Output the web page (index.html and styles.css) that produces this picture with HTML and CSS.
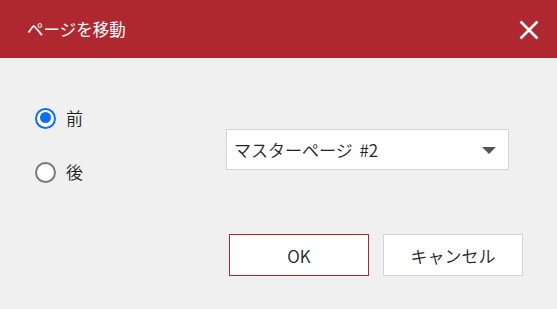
FILE: index.html
```html
<!DOCTYPE html>
<html lang="ja">
<head>
<meta charset="utf-8">
<link rel="stylesheet" href="styles.css">
</head>
<body>
<div class="dialog">
  <header class="header">
    <span class="title">ページを移動</span>
    <span class="close" aria-label="閉じる">
      <svg width="20" height="20" viewBox="0 0 20 20"><path d="M1.5 1.5 L18.5 18.5 M18.5 1.5 L1.5 18.5" stroke="#fff" stroke-width="2.6" fill="none"/></svg>
    </span>
  </header>
  <section class="content">
    <div class="main">
      <div class="radios">
        <label class="radio-row"><span class="radio checked"></span><span class="label">前</span></label>
        <label class="radio-row"><span class="radio"></span><span class="label">後</span></label>
      </div>
      <div class="select">
        <span class="select-text">マスターページ&nbsp;#2</span>
        <span class="arrow"></span>
      </div>
    </div>
    <div class="actions">
      <button class="btn primary">OK</button>
      <button class="btn">キャンセル</button>
    </div>
  </section>
</div>
</body>
</html>
```
FILE: styles.css
```css
html, body {
  margin: 0;
  padding: 0;
}
body {
  width: 557px;
  height: 309px;
  background: #f0f0f0;
  font-family: "Noto Sans CJK JP", "Noto Sans", sans-serif;
  font-weight: 350;
  color: #222;
  overflow: hidden;
}
.dialog {
  width: 557px;
  height: 309px;
  background: #f0f0f0;
}
.header {
  height: 58px;
  background: #b0282f;
  display: flex;
  align-items: center;
  justify-content: space-between;
  padding: 0 18px 0 27px;
  box-sizing: border-box;
}
.title {
  color: #fff;
  font-size: 16.5px;
  font-weight: 400;
  line-height: 20px;
  margin-top: -1px;
}
.close {
  display: flex;
  width: 20px;
  height: 20px;
  margin-top: 1px;
}
.content {
  padding: 45px 34px 0 35px;
}
.main {
  display: flex;
}
.radios {
  width: 191px;
  display: flex;
  flex-direction: column;
  gap: 24px;
}
.radio-row {
  height: 30px;
  display: flex;
  align-items: center;
  gap: 10px;
}
.radio {
  width: 21px;
  height: 21px;
  box-sizing: border-box;
  border-radius: 50%;
  border: 2px solid #7a7a7a;
  background: #fff;
  position: relative;
}
.radio.checked {
  border: 2.5px solid #0a6ef7;
}
.radio.checked::after {
  content: "";
  position: absolute;
  left: 2.5px;
  top: 2.5px;
  width: 11px;
  height: 11px;
  border-radius: 50%;
  background: #0a6ef7;
}
.label {
  font-size: 17px;
  line-height: 20px;
  color: #222;
}
.select {
  width: 283px;
  height: 41px;
  margin-top: 26px;
  box-sizing: border-box;
  background: #fff;
  border: 1px solid #d3d3da;
  display: flex;
  align-items: center;
  justify-content: space-between;
  padding: 0 12px 0 7px;
}
.select-text {
  font-size: 17px;
  color: #222;
  line-height: 20px;
  word-spacing: 3px;
}
.arrow {
  width: 0;
  height: 0;
  border-left: 7.5px solid transparent;
  border-right: 7.5px solid transparent;
  border-top: 7px solid #555;
  margin-top: 1px;
}
.actions {
  margin-top: 47px;
  display: flex;
  justify-content: flex-end;
  gap: 14px;
}
.btn {
  width: 140px;
  height: 42px;
  box-sizing: border-box;
  background: #fff;
  border: 1px solid #d3d3da;
  font-family: inherit;
  font-weight: 350;
  font-size: 17px;
  color: #222;
  padding: 0;
}
.btn.primary {
  border-color: #b0282f;
}
```
